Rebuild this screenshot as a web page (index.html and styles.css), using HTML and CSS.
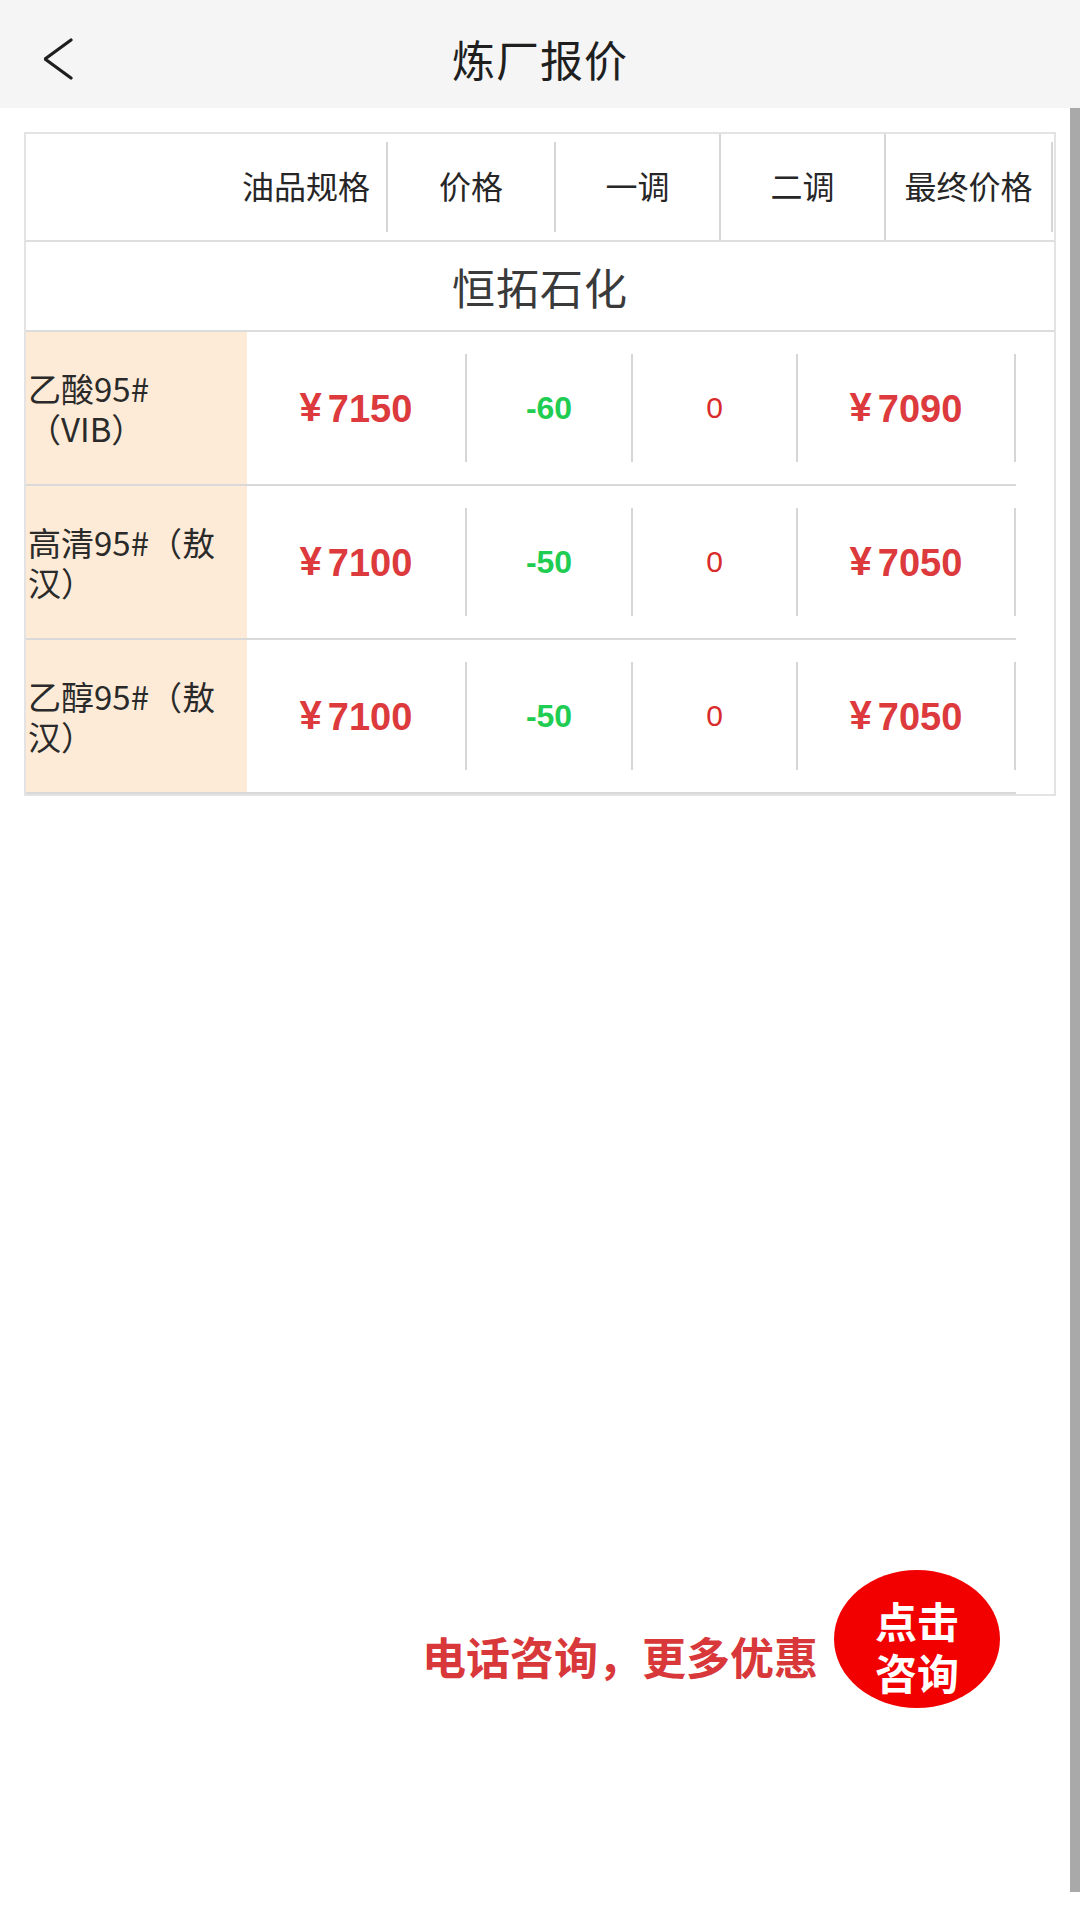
FILE: index.html
```html
<!DOCTYPE html>
<html lang="zh-CN">
<head>
<meta charset="utf-8">
<title>炼厂报价</title>
<link rel="stylesheet" href="styles.css">
</head>
<body>
<div class="page">
  <header class="topbar">
    <a class="back" aria-label="返回">
      <svg width="30" height="42" viewBox="0 0 30 42"><polyline points="27,2 1,21 27,40" fill="none" stroke="#1e1e1e" stroke-width="3.2" stroke-linecap="round" stroke-linejoin="round"/></svg>
    </a>
    <h1 class="title">炼厂报价</h1>
  </header>

  <main class="content">
    <section class="table">
      <div class="thead">
        <div class="hcell h-spec">油品规格</div><i class="vline short"></i>
        <div class="hcell h-price">价格</div><i class="vline short"></i>
        <div class="hcell h-adj">一调</div><i class="vline"></i>
        <div class="hcell h-adj">二调</div><i class="vline"></i>
        <div class="hcell h-final">最终价格</div><i class="vline short"></i>
      </div>
      <div class="company">恒拓石化</div>

      <div class="row">
        <div class="name">乙酸95#（VIB）</div>
        <div class="cell c-price"><span class="price"><span class="yen">¥</span>7150</span></div><i class="vline inset"></i>
        <div class="cell c-adj1"><span class="down">-60</span></div><i class="vline inset"></i>
        <div class="cell c-adj2"><span class="zero">0</span></div><i class="vline inset"></i>
        <div class="cell c-final"><span class="price"><span class="yen">¥</span>7090</span></div><i class="vline inset"></i>
      </div>
      <div class="row">
        <div class="name">高清95#（敖汉）</div>
        <div class="cell c-price"><span class="price"><span class="yen">¥</span>7100</span></div><i class="vline inset"></i>
        <div class="cell c-adj1"><span class="down">-50</span></div><i class="vline inset"></i>
        <div class="cell c-adj2"><span class="zero">0</span></div><i class="vline inset"></i>
        <div class="cell c-final"><span class="price"><span class="yen">¥</span>7050</span></div><i class="vline inset"></i>
      </div>
      <div class="row">
        <div class="name">乙醇95#（敖汉）</div>
        <div class="cell c-price"><span class="price"><span class="yen">¥</span>7100</span></div><i class="vline inset"></i>
        <div class="cell c-adj1"><span class="down">-50</span></div><i class="vline inset"></i>
        <div class="cell c-adj2"><span class="zero">0</span></div><i class="vline inset"></i>
        <div class="cell c-final"><span class="price"><span class="yen">¥</span>7050</span></div><i class="vline inset"></i>
      </div>
    </section>

    <section class="cta">
      <p class="cta-text">电话咨询，更多优惠</p>
      <a class="cta-btn"><span class="cta-line">点击</span><span class="cta-line">咨询</span></a>
    </section>
  </main>

  <div class="scrollbar"></div>
</div>
</body>
</html>
```

FILE: styles.css
```css
* { box-sizing: border-box; }

html, body {
  margin: 0;
  padding: 0;
  background: #ffffff;
}

body {
  font-family: "Noto Sans CJK SC", "Noto Sans", sans-serif;
  color: #2b2b2b;
}

.page {
  position: relative;
  width: 1080px;
  min-height: 1920px;
  background: #ffffff;
}

/* top bar */
.topbar {
  height: 108px;
  background: #f5f5f5;
  display: flex;
  align-items: center;
  justify-content: center;
  padding-top: 8px;
  position: relative;
}

.back {
  position: absolute;
  left: 44px;
  top: 38px;
  display: block;
  line-height: 0;
}

.title {
  margin: 0;
  font-size: 43px;
  font-weight: 400;
  color: #1f1f1f;
  line-height: 1;
  letter-spacing: 1px;
}

/* content */
.content {
  padding: 24px 24px 0 24px;
}

.table {
  width: 1032px;
  border: 2px solid #e3e3e3;
  background: #ffffff;
}

.thead {
  display: flex;
  height: 108px;
  border-bottom: 2px solid #dedede;
  align-items: stretch;
}

.hcell {
  display: flex;
  align-items: center;
  justify-content: center;
  font-size: 32px;
  color: #262626;
  padding-bottom: 4px;
}

.h-spec {
  width: 360px;
  justify-content: flex-end;
  padding-right: 16px;
}
.h-price { width: 166px; }
.h-adj { width: 163px; }
.h-final { width: 165px; }

.vline {
  display: block;
  width: 2px;
  flex: none;
  background: #d6d6d6;
}
.vline.short {
  margin: 8px 0;
}
.vline.inset {
  margin: 22px 0;
}

.company {
  height: 90px;
  border-bottom: 2px solid #dcdcdc;
  display: flex;
  align-items: center;
  justify-content: center;
  font-size: 43px;
  color: #3a3a3a;
  letter-spacing: 1px;
}

.row {
  display: flex;
  width: 990px;
  height: 154px;
  border-bottom: 2px solid #d9d9d9;
}

.name {
  width: 221px;
  flex: none;
  background: #fdebd7;
  display: flex;
  align-items: center;
  padding-left: 2px;
  padding-right: 14px;
  font-size: 33px;
  line-height: 40px;
  color: #2a2a2a;
}

.cell {
  display: flex;
  align-items: center;
  justify-content: center;
  flex: none;
  font-family: "Liberation Sans", "Noto Sans CJK SC", sans-serif;
}
.c-price { width: 218px; }
.c-adj1 { width: 164px; }
.c-adj2 { width: 163px; }
.c-final { width: 216px; }

.price {
  font-size: 38px;
  font-weight: 700;
  color: #dc3a3c;
  display: inline-flex;
  align-items: baseline;
}

.yen {
  font-size: 40px;
  margin-right: 6px;
  transform: translateY(-1px);
}

.down {
  font-size: 32px;
  font-weight: 700;
  color: #1fcd52;
}

.zero {
  font-size: 30px;
  color: #d92b2b;
}

/* call to action */
.cta {
  margin-top: 774px;
  display: flex;
  justify-content: flex-end;
  align-items: center;
  padding-right: 56px;
  gap: 16px;
}

.cta-text {
  margin: 34px 0 0 0;
  font-size: 44px;
  font-weight: 700;
  color: #d9383b;
  line-height: 1;
  white-space: nowrap;
}

.cta-btn {
  width: 166px;
  height: 138px;
  flex: none;
  border-radius: 50%;
  background: #f20000;
  color: #ffffff;
  font-size: 42px;
  font-weight: 700;
  display: flex;
  flex-direction: column;
  align-items: center;
  justify-content: center;
  text-align: center;
  padding-top: 14px;
}

.cta-line {
  display: block;
  line-height: 52px;
  height: 52px;
}

.scrollbar {
  position: absolute;
  top: 108px;
  right: 0;
  width: 10px;
  height: 1784px;
  background: #a9a9a9;
}
```
